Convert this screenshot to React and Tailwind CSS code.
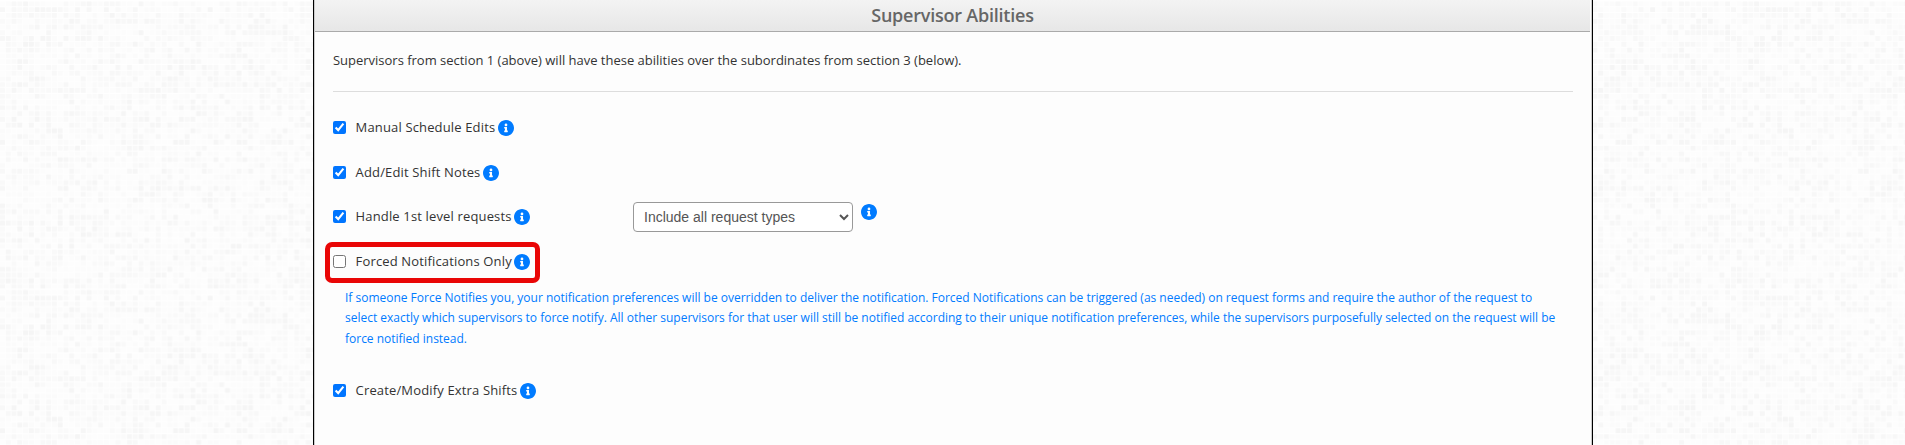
import React from 'react';

const CELL = 5.77;
const COLS = 50;
const ROWS = 50;

// small hash so the mosaic is the same on each render
const shade = (x, y) => {
  const n = Math.sin(x * 127.1 + y * 311.7) * 43758.5453;
  return n - Math.floor(n);
};

const tiles = [];
for (let y = 0; y < ROWS; y++) {
  for (let x = 0; x < COLS; x++) {
    tiles.push({ x, y, opacity: 0.008 + Math.pow(shade(x, y), 2) * 0.032 });
  }
}

const Mosaic = () => (
  <svg className="absolute inset-0 w-full h-full" aria-hidden="true">
    <defs>
      <pattern id="mosaic" width={CELL * COLS} height={CELL * ROWS} patternUnits="userSpaceOnUse">
        {tiles.map((t) => (
          <rect
            key={`${t.x}-${t.y}`}
            x={t.x * CELL}
            y={t.y * CELL + 1.4}
            width="4.9"
            height="4.9"
            rx="0.5"
            fillOpacity={t.opacity}
          />
        ))}
      </pattern>
    </defs>
    <rect width="100%" height="100%" fill="url(#mosaic)" />
  </svg>
);

const InfoIcon = () => (
  <svg viewBox="8 8 496 496" className="size-4 shrink-0 text-[#007bff]" fill="currentColor">
    <path d="M256 8C119.043 8 8 119.083 8 256c0 136.997 111.043 248 248 248s248-111.003 248-248C504 119.083 392.957 8 256 8zm0 110c23.196 0 42 18.804 42 42s-18.804 42-42 42-42-18.804-42-42 18.804-42 42-42zm56 254c0 6.627-5.373 12-12 12h-88c-6.627 0-12-5.373-12-12v-24c0-6.627 5.373-12 12-12h12v-64h-12c-6.627 0-12-5.373-12-12v-24c0-6.627 5.373-12 12-12h64c6.627 0 12 5.373 12 12v100h12c6.627 0 12 5.373 12 12v24z" />
  </svg>
);

const Ability = ({ label, checked }) => (
  <div className="flex items-center h-4">
    <input type="checkbox" defaultChecked={checked} className="size-[13px] m-0 -mt-px shrink-0" />
    <span className="ml-[9.6px] mr-[2.4px] -mt-px whitespace-nowrap tracking-[0.15px]">{label}</span>
    <InfoIcon />
  </div>
);

const App = () => {
  return (
    <div className="relative h-[445px] overflow-hidden bg-white font-['Open_Sans',sans-serif] text-[13px] text-[#333]">
      <Mosaic />
      <div className="relative ml-[313px] w-[1280px] h-full border-x border-black bg-[#fdfdfd]">
        <div className="h-full border-x border-[#ccc]">
          <h2 className="h-8 mr-px border-b border-[#aaa] bg-linear-to-b from-[#f3f3f3] to-[#e7e7e7] text-center text-[18px] leading-[30px] font-semibold tracking-[-0.22px] text-[#666]">
            Supervisor Abilities
          </h2>
          <div className="pl-[18px] pr-[18px] pt-[18px]">
            <p className="h-[41px] leading-5 tracking-[-0.012px]">
              Supervisors from section 1 (above) will have these abilities over the subordinates from section 3 (below).
            </p>
            <hr className="border-[#ddd]" />
            <div className="mt-7 flex flex-col">
              <Ability label="Manual Schedule Edits" checked />
              <div className="mt-[29px]">
                <Ability label="Add/Edit Shift Notes" checked />
              </div>
              <div className="mt-[21px] flex items-center h-[30px]">
                <div className="w-[300px]">
                  <Ability label="Handle 1st level requests" checked />
                </div>
                <select className="w-[220px] h-[30px] rounded border border-[#999] bg-white pl-[6px] text-[14px] text-[#555] font-['Liberation_Sans',sans-serif]">
                  <option>Include all request types</option>
                </select>
                <div className="ml-2 -mt-[10px]">
                  <InfoIcon />
                </div>
              </div>
              <div className="-ml-2 mt-[10px] w-[215px] h-[41px] rounded-[7px] border-5 border-[#e90606] pl-[3px] pt-[7px]">
                <Ability label="Forced Notifications Only" />
              </div>
              <p className="ml-3 mt-[5px] w-[1215px] text-[12px] leading-[20.4px] tracking-[-0.01px] text-[#007bff]">
                If someone Force Notifies you, your notification preferences will be overridden to deliver the notification. Forced Notifications can be triggered (as needed) on request forms and require the author of the request to select exactly which supervisors to force notify. All other supervisors for that user will still be notified according to their unique notification preferences, while the supervisors purposefully selected on the request will be force notified instead.
              </p>
              <div className="mt-[34px]">
                <Ability label="Create/Modify Extra Shifts" checked />
              </div>
            </div>
          </div>
        </div>
      </div>
    </div>
  );
};

export default App;
